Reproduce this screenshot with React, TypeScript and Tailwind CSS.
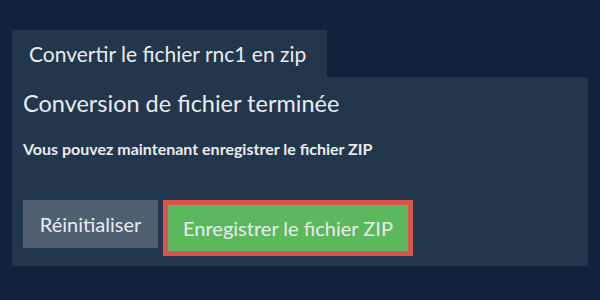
export default function App() {
  return (
    <div className="w-[600px] h-[300px] bg-[#10233a] px-[12px] pt-[30px] font-['Lato',sans-serif] text-[#e9ecef]">
      <div className="w-[315px] h-[47px] bg-[#22364c] flex items-center pl-[17px] text-[21px]">
        Convertir le fichier rnc1 en zip
      </div>
      <div className="h-[189px] bg-[#22364c] px-[11px] pt-[12px]">
        <h1 className="text-[23.5px] leading-[28px]">Conversion de fichier terminée</h1>
        <p className="mt-[22px] text-[16px] font-bold leading-[20px]">
          Vous pouvez maintenant enregistrer le fichier ZIP
        </p>
        <div className="mt-[41px] flex items-start gap-[5px]">
          <button className="w-[135px] h-[48px] bg-[#4f5f70] text-[20px]">Réinitialiser</button>
          <button className="w-[250px] h-[56px] bg-[#5cb85c] border-[5px] border-[#d9534f] text-[20px]">
            Enregistrer le fichier ZIP
          </button>
        </div>
      </div>
    </div>
  );
}
